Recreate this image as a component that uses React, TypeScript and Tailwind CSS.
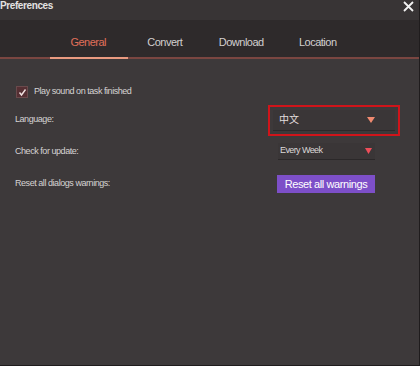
import { useState } from "react"

const tabs = ["General", "Convert", "Download", "Location"]

export default function App() {
  const [active, setActive] = useState("General")
  const [sound, setSound] = useState(true)

  return (
    <div className="w-[420px] h-[366px] flex flex-col bg-[#3d393a] text-[#d6d3d3] border-r border-b border-[#1f1c1d] font-['Liberation_Sans',Arial,sans-serif] overflow-hidden">

      {/* Title bar */}
      <div className="h-[20px] flex items-center justify-between bg-[#383435] pr-[5px]">
        <span className="text-[10px] font-bold text-[#e4e2e2] leading-none -mt-[8px] tracking-[-0.4px]">Preferences</span>
        <svg width="11" height="11" viewBox="0 0 11 11" className="-mt-[7px]">
          <path d="M1 1 L10 10 M10 1 L1 10" stroke="#f2f2f2" strokeWidth="1.8" />
        </svg>
      </div>

      {/* Tabs */}
      <div className="h-[39px] bg-[#2e2a2b] flex flex-col">
        <div className="flex-1 flex items-center pl-[50px] pt-[8px]">
          {tabs.map((t) => (
            <button
              key={t}
              onClick={() => setActive(t)}
              className={
                "w-[76.5px] h-full flex items-center justify-center text-[11px] tracking-[-0.5px] " +
                (active === t ? "text-[#e0705a]" : "text-[#d2cfcf]")
              }
            >
              {t}
            </button>
          ))}
        </div>
        <div className="h-[2px] bg-[#7a4641] pl-[50px]">
          <div className="w-[78px] h-full bg-[#e99a80]" />
        </div>
      </div>

      {/* Content */}
      <div className="flex flex-col pl-[15px] pr-[20px] pt-[26px] text-[9px] tracking-[-0.45px]">
        <label className="flex items-center gap-[6px] pl-[1px] h-[14px]" onClick={() => setSound(!sound)}>
          <span className="w-[12px] h-[12px] bg-[#552f33] border border-[#6a4a4c] flex items-center justify-center">
            {sound && (
              <svg width="9" height="9" viewBox="0 0 9 9">
                <path d="M1.5 4.5 L3.5 7 L7.5 1.5" stroke="#f0e0e0" strokeWidth="1.4" fill="none" />
              </svg>
            )}
          </span>
          <span>Play sound on task finished</span>
        </label>

        <div className="flex items-center justify-between mt-[5px] h-[32px]">
          <span>Language:</span>
          <div className="w-[132px] h-[31px] border-2 border-[#d0141a] -mr-[1px] flex items-center px-[3px]">
            <div className="flex-1 h-[21px] flex items-center justify-between pl-[6px] pr-[20px] bg-[#3a3637] border-b border-[#2c292a]">
              <span className="text-[10px] tracking-normal text-[#e2dede] font-['Noto_Sans_CJK_SC',sans-serif] -mt-[2px]">中文</span>
              <svg width="8" height="6" viewBox="0 0 8 6"><path d="M0 0 H8 L4 6 Z" fill="#f08a70" /></svg>
            </div>
          </div>
        </div>

        <div className="flex items-center justify-between mt-[1px] h-[29px]">
          <span>Check for update:</span>
          <div className="w-[97px] h-[17px] mr-[24px] flex items-center justify-between pl-[2px] pr-[3px] bg-[#3a3637] border-b border-[#2b2829]">
            <span className="text-[9px] tracking-[-0.6px] text-[#dcd8d8]">Every Week</span>
            <svg width="7" height="6" viewBox="0 0 7 6"><path d="M0 0 H7 L3.5 6 Z" fill="#ee4e5a" /></svg>
          </div>
        </div>

        <div className="flex items-center justify-between mt-[9px] h-[18px]">
          <span>Reset all dialogs warnings:</span>
          <button className="w-[98px] h-[18px] mr-[24px] bg-[#7d4fc8] text-white text-[11px] tracking-[-0.4px] leading-none">
            Reset all warnings
          </button>
        </div>
      </div>
    </div>
  )
}
